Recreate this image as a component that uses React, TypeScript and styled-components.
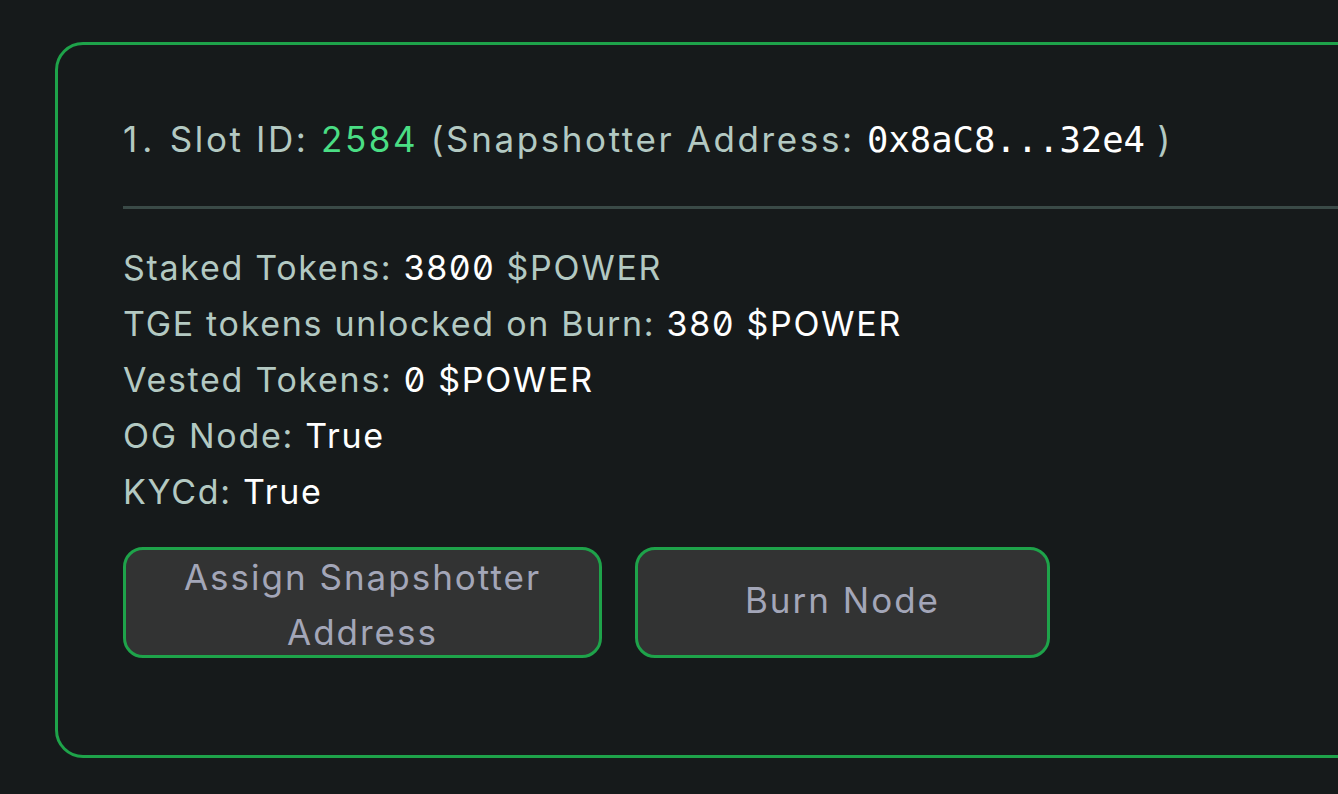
import React from "react";
import styled, { createGlobalStyle } from "styled-components";

const Global = createGlobalStyle`
  html, body {
    margin: 0;
    padding: 0;
    background: #161a1b;
    overflow: hidden;
  }
  body {
    font-family: Inter, "Liberation Sans", sans-serif;
  }
`;

const Page = styled.div`
  padding: 42px 0 0 55px;
  width: 1338px;
  height: 794px;
  box-sizing: border-box;
`;

const Card = styled.section`
  width: 1400px;
  box-sizing: border-box;
  border: 3px solid #1ea34a;
  border-radius: 28px;
  padding: 74px 0 97px 65px;
`;

const Title = styled.div`
  font-size: 35px;
  line-height: 40px;
  letter-spacing: 2.6px;
  color: #b3c9c2;
  white-space: nowrap;
  font-feature-settings: "zero";
`;

const Index = styled.span`
  letter-spacing: 5px;
`;

const Green = styled.span`
  color: #4ade84;
`;

const Mono = styled.span`
  font-family: "DejaVu Sans Mono", monospace;
  color: #ffffff;
  font-size: 35.5px;
  letter-spacing: 0;
`;

const Divider = styled.hr`
  border: none;
  height: 3px;
  background: #3a4a47;
  margin: 46px 0 31px 0;
`;

const Info = styled.div`
  display: flex;
  flex-direction: column;
`;

const Line = styled.div`
  font-size: 34px;
  line-height: 56px;
  letter-spacing: 1.7px;
  color: #b3c9c2;
  white-space: nowrap;
  font-feature-settings: "zero";
`;

const Value = styled.span<{ $muted?: boolean }>`
  color: ${(p) => (p.$muted ? "#b3c9c2" : "#ffffff")};
`;

const Actions = styled.div`
  display: flex;
  gap: 33px;
  margin-top: 27px;
`;

const Button = styled.button<{ $w: number }>`
  width: ${(p) => p.$w}px;
  height: 111px;
  box-sizing: border-box;
  border: 3px solid #1ea34a;
  border-radius: 20px;
  background: #323333;
  color: #a3a6b8;
  font-family: Inter, "Liberation Sans", sans-serif;
  font-size: 35px;
  letter-spacing: 2px;
  line-height: 55px;
  padding: 0 36px 5px;
  cursor: pointer;
`;

export default function App() {
  return (
    <>
      <Global />
      <Page>
        <Card>
          <Title>
            <Index>1.</Index> Slot ID: <Green>2584</Green> (Snapshotter Address:{" "}
            <Mono>0x8aC8...32e4</Mono> )
          </Title>
          <Divider />
          <Info>
            <Line>
              Staked Tokens: <Value>3800</Value> <Value $muted>$POWER</Value>
            </Line>
            <Line>
              TGE tokens unlocked on Burn: <Value>380 $POWER</Value>
            </Line>
            <Line>
              Vested Tokens: <Value>0 $POWER</Value>
            </Line>
            <Line>
              OG Node: <Value>True</Value>
            </Line>
            <Line>
              KYCd: <Value>True</Value>
            </Line>
          </Info>
          <Actions>
            <Button $w={479}>Assign Snapshotter Address</Button>
            <Button $w={415}>Burn Node</Button>
          </Actions>
        </Card>
      </Page>
    </>
  );
}
